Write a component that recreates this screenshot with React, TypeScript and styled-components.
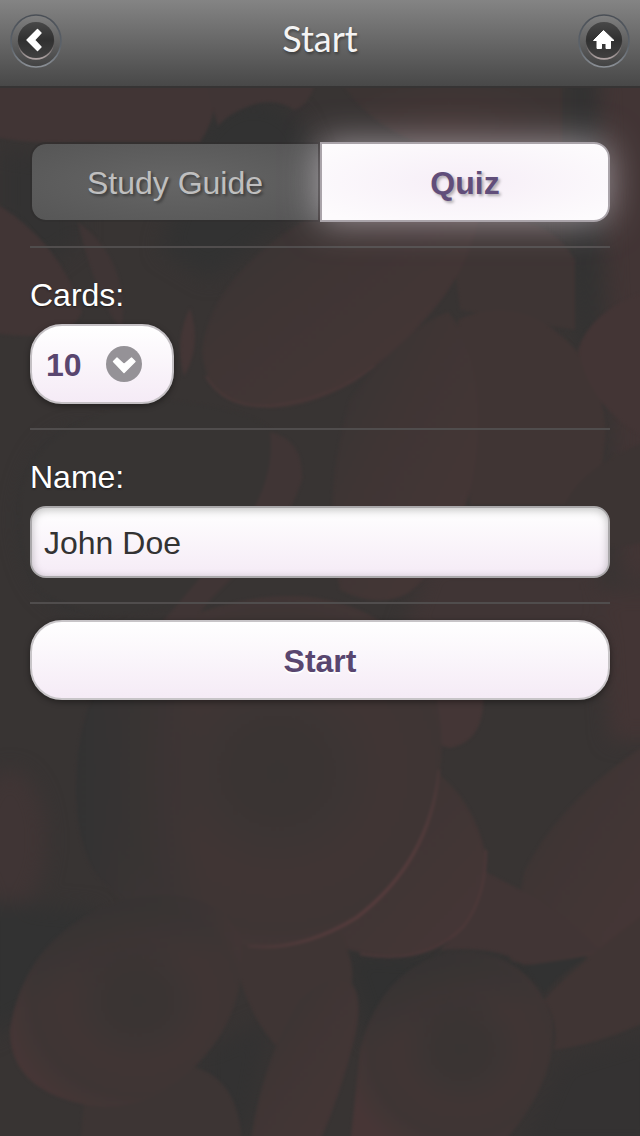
import React, { useState } from "react";
import styled, { createGlobalStyle } from "styled-components";

const GlobalStyle = createGlobalStyle`
  * { box-sizing: border-box; }
  body { margin: 0; background: #343332; }
  body, button, input, select { font-family: "Liberation Sans", Helvetica, Arial, sans-serif; }
`;

const Page = styled.div`
  position: relative;
  min-height: 100vh;
  overflow: hidden;
  isolation: isolate;
  font-size: 32px;
  color: #fff;
`;

const Backdrop = styled.svg`
  position: absolute;
  inset: 0;
  width: 100%;
  height: 100%;
  z-index: -1;
`;

const Header = styled.header`
  display: flex;
  align-items: center;
  justify-content: space-between;
  height: 88px;
  padding: 0 10px 4px;
  border-bottom: 2px solid #363434;
  background: linear-gradient(#848484, #484848);
`;

const Title = styled.h1`
  margin: 0;
  padding-bottom: 6px;
  color: #f4f4f4;
  font: 400 36px/44px Lato, "Open Sans", sans-serif;
  text-shadow: 1px 2px 3px rgba(0, 0, 0, 0.4);
`;

const RoundButton = styled.button`
  display: flex;
  width: 52px;
  height: 54px;
  padding: 0;
  border: 0;
  background: none;
  cursor: pointer;
`;

const Form = styled.form`
  display: flex;
  flex-direction: column;
  padding: 54px 30px;
`;

const Segments = styled.div`
  display: flex;
`;

const HiddenRadio = styled.input`
  position: absolute;
  opacity: 0;
  pointer-events: none;
`;

const Segment = styled.label<{ $on: boolean; $side: "left" | "right" }>`
  position: relative;
  z-index: ${(p) => (p.$on ? 1 : 0)};
  display: flex;
  flex: 1;
  align-items: center;
  justify-content: center;
  height: 80px;
  padding-top: 2px;
  border: 2px solid ${(p) => (p.$on ? "#aaa4aa" : "rgba(45, 43, 43, 0.5)")};
  border-radius: ${(p) => (p.$side === "left" ? "16px 0 0 16px" : "0 16px 16px 0")};
  background: ${(p) =>
    p.$on
      ? "radial-gradient(ellipse at center, #f6eef7, #fdfbfd 90%)"
      : "radial-gradient(ellipse at center, #666, #565656) padding-box"};
  box-shadow: ${(p) => (p.$on ? "0 0 36px rgba(255, 245, 255, 0.5)" : "none")};
  color: ${(p) => (p.$on ? "#614e7a" : "#bfbfbf")};
  font-weight: ${(p) => (p.$on ? 700 : 400)};
  text-shadow: 2px 2px 3px ${(p) => (p.$on ? "rgba(0, 0, 0, 0.3)" : "rgba(0, 0, 0, 0.4)")};
  cursor: pointer;
`;

const Divider = styled.hr`
  width: 100%;
  height: 2px;
  margin: 24px 0;
  border: 0;
  background: #504d4d;
`;

const FieldLabel = styled.label`
  margin-bottom: 6px;
  line-height: 46px;
  text-shadow: 0 1px 2px rgba(0, 0, 0, 0.5);
`;

const SelectWrap = styled.div`
  position: relative;
  align-self: flex-start;
`;

const Select = styled.select`
  display: block;
  width: 144px;
  height: 80px;
  padding: 2px 14px 0;
  appearance: none;
  border: 2px solid #c4c0c4;
  border-radius: 32px;
  background: linear-gradient(#fff, #f5ebf6);
  box-shadow: 0 2px 6px rgba(0, 0, 0, 0.4);
  color: #59466f;
  font-size: 32px;
  font-weight: 700;
`;

const SelectArrow = styled.svg`
  position: absolute;
  top: 22px;
  right: 32px;
  pointer-events: none;
`;

const TextInput = styled.input`
  width: 100%;
  height: 72px;
  padding: 2px 12px 0;
  border: 2px solid #aaa8aa;
  border-radius: 16px;
  background: linear-gradient(#fff, #f5ebf6);
  box-shadow: inset 0 2px 8px rgba(0, 0, 0, 0.25);
  color: #333;
  font-size: 32px;
`;

const SubmitButton = styled.button`
  height: 80px;
  margin-top: -8px;
  padding: 2px 0 0;
  border: 2px solid #c8c5c8;
  border-radius: 32px;
  background: linear-gradient(#fff, #f5ebf6);
  box-shadow: 0 2px 6px rgba(0, 0, 0, 0.4);
  color: #59466f;
  font-size: 32px;
  font-weight: 700;
  text-shadow: 0 2px 0 #fff;
  cursor: pointer;
`;

function ButtonFace({ id, children }: { id: string; children: React.ReactNode }) {
  return (
    <svg width="52" height="54" viewBox="0 0 52 54" aria-hidden="true">
      <defs>
        <linearGradient id={`${id}-ring`} x1="0" y1="0" x2="0" y2="1">
          <stop offset="0" stopColor="#4a4f56" />
          <stop offset="0.6" stopColor="#5c636b" />
          <stop offset="1" stopColor="#8b9096" />
        </linearGradient>
        <linearGradient id={`${id}-well`} x1="0" y1="0" x2="0" y2="1">
          <stop offset="0" stopColor="#808080" />
          <stop offset="1" stopColor="#424242" />
        </linearGradient>
        <linearGradient id={`${id}-rim`} x1="0" y1="0" x2="0" y2="1">
          <stop offset="0.5" stopColor="#4a4848" />
          <stop offset="1" stopColor="#b5a9a9" />
        </linearGradient>
        <linearGradient id={`${id}-disc`} x1="0" y1="0" x2="0" y2="1">
          <stop offset="0" stopColor="#484848" />
          <stop offset="0.5" stopColor="#303030" />
          <stop offset="1" stopColor="#404040" />
        </linearGradient>
      </defs>
      <ellipse cx="26" cy="27" rx="25" ry="26" fill={`url(#${id}-well)`} stroke={`url(#${id}-ring)`} strokeWidth="1.6" />
      <circle cx="26" cy="27.5" r="18.300" fill={`url(#${id}-rim)`} />
      <circle cx="26" cy="26" r="18" fill={`url(#${id}-disc)`} />
      {children}
    </svg>
  );
}

function CellsBackdrop() {
  return (
    <Backdrop viewBox="0 0 640 1136" preserveAspectRatio="xMidYMid slice" aria-hidden="true">
      <defs>
        <radialGradient id="cell">
          <stop offset="0" stopColor="#433635" />
          <stop offset="0.6" stopColor="#3f3534" />
          <stop offset="1" stopColor="#3c3433" />
        </radialGradient>
        <linearGradient id="lit" x1="0" y1="0" x2="1" y2="1">
          <stop offset="0" stopColor="#353333" />
          <stop offset="0.4" stopColor="#3f3534" />
          <stop offset="1" stopColor="#463636" />
        </linearGradient>
        <radialGradient id="big" cx="0.55" cy="0.5" r="0.6">
          <stop offset="0" stopColor="#393433" />
          <stop offset="0.2" stopColor="#3a3433" />
          <stop offset="0.5" stopColor="#403534" />
          <stop offset="0.75" stopColor="#3e3534" />
          <stop offset="1" stopColor="#473636" />
        </radialGradient>
        <linearGradient id="shade" x1="0" y1="0" x2="1" y2="0">
          <stop offset="0" stopColor="#323232" />
          <stop offset="0.35" stopColor="#323232" stopOpacity="0" />
        </linearGradient>
        <linearGradient id="top-shade" x1="0" y1="0" x2="0.3" y2="1">
          <stop offset="0" stopColor="#333232" />
          <stop offset="0.5" stopColor="#333232" stopOpacity="0" />
        </linearGradient>
        <linearGradient id="rim" x1="0" y1="0" x2="1" y2="1">
          <stop offset="0.4" stopColor="#583c3d" stopOpacity="0" />
          <stop offset="0.7" stopColor="#583c3d" />
        </linearGradient>
        <filter id="soft" filterUnits="userSpaceOnUse" x="-60" y="-60" width="760" height="1256" colorInterpolationFilters="sRGB">
          <feGaussianBlur stdDeviation="10" />
        </filter>
        <filter id="focus" filterUnits="userSpaceOnUse" x="-60" y="-60" width="760" height="1256" colorInterpolationFilters="sRGB">
          <feGaussianBlur stdDeviation="1.5" />
        </filter>
      </defs>
      <rect width="640" height="1136" fill="#383433" />
      <g filter="url(#soft)">
        <path d="M570 70H595V430L570 270Z" fill="#323232" />
        <path d="M200 130C230 90 270 90 300 120L330 190L210 280L160 250Z" fill="#323232" />
        <path d="M0 150L80 160V240L40 270L0 220Z" fill="#333232" />
        <ellipse cx="80" cy="520" rx="60" ry="90" fill="#343333" />
        <path d="M600 60H680V580H620L610 300Z" fill="#423535" />
        <path d="M600 590H680V740H610Z" fill="#433535" />
        <path d="M430 560H600V640H400Z" fill="#403535" />
        <ellipse cx="10" cy="840" rx="36" ry="70" fill="#403535" />
        <path d="M-20 900L100 910L60 1000L-20 1040Z" fill="#323232" />
        <path d="M200 1050L270 1020L250 1136H200Z" fill="#333232" />
        <path d="M340 950L540 960L530 1040L370 1040Z" fill="#313131" />
        <path d="M560 1060L660 1030V1150H520Z" fill="#343232" />
      </g>

      <g filter="url(#focus)">
        <path d="M-10 80H205Q225 105 200 142H75Q30 145 -10 136Z" fill="#413535" />
        <path d="M205 80H316Q310 105 294 110Q278 98 255 104Q230 112 218 126Z" fill="#403535" />
        <path d="M340 80H562V150Q520 180 440 150Q370 130 340 80Z" fill="url(#cell)" />
        <path d="M-10 200Q60 240 82 312Q68 346 -10 332Z" fill="#413535" />
        <path d="M78 222Q130 260 122 330Q96 300 78 222Z" fill="#3f3535" />
        <path d="M190 308Q202 346 184 376Q174 340 190 308Z" fill="#443636" />

        <path d="M450 230Q540 200 575 260V330L460 310Z" fill="#3e3534" />
        <path d="M458 320Q520 290 576 350Q612 400 604 450Q596 520 566 505L470 505Z" fill="#403534" />
        <path d="M650 290Q590 310 578 350Q590 410 650 440Z" fill="#433535" />
        <path d="M350 400Q400 330 448 312Q482 350 478 440Q470 540 410 592Q380 610 340 590Q320 500 350 400Z" fill="url(#lit)" />
        <path d="M202 350Q212 268 330 206Q440 166 480 210Q468 300 354 382Q286 420 238 402Q204 390 202 350Z" fill="url(#lit)" />
        <path d="M206 376Q224 408 270 406Q330 400 374 366" fill="none" stroke="#4c3939" strokeWidth="2" />

        <path d="M20 500Q30 420 160 400Q280 410 280 450Q274 530 210 590Q110 640 40 590Q18 560 20 500Z" fill="#373433" />
        <path d="M270 432Q304 440 302 480Q286 530 240 570L210 600Q180 640 130 660Q190 590 240 530Q276 480 270 432Z" fill="#403535" />
        <path d="M650 440Q570 470 560 520Q590 560 650 540Z" fill="#3c3433" />

        <path d="M440 680H482Q490 740 450 748L430 742Z" fill="#443636" />
        <path d="M650 742Q560 800 524 872L510 960Q560 980 650 930Z" fill="url(#lit)" />
        <path d="M482 870Q490 900 440 950Q500 945 524 965Q570 955 600 950L540 900Z" fill="#413535" />
        <path d="M434 770Q474 800 486 856Q488 926 430 950Q380 965 322 940Z" fill="url(#lit)" />
        <path d="M486 850Q486 896 464 926Q426 966 360 954" fill="none" stroke="#4f393a" strokeWidth="2" />

        <path d="M230 930L330 920Q360 960 350 990Q300 990 280 1050Q240 1010 230 930Z" fill="#3f3534" />
        <path d="M76 790Q76 650 180 620Q330 560 414 650Q452 700 438 790Q420 870 356 918Q300 952 250 946Q140 930 94 872Q76 840 76 790Z" fill="url(#big)" />
        <path d="M76 790Q76 650 180 620Q330 560 414 650Q452 700 438 790Q420 870 356 918Q300 952 250 946Q140 930 94 872Q76 840 76 790Z" fill="url(#shade)" />
        <path d="M439 770Q430 862 356 918Q300 952 248 946" fill="none" stroke="url(#rim)" strokeWidth="3" />

        <path d="M180 1065Q240 1070 242 1146H80L84 1100Z" fill="#3d3534" />
        <path d="M10 1030Q24 936 120 900Q210 880 240 936Q252 1020 180 1080Q130 1118 74 1102Q10 1085 10 1030Z" fill="url(#big)" />
        <path d="M10 1030Q24 936 120 900Q210 880 240 936Q252 1020 180 1080Q130 1118 74 1102Q10 1085 10 1030Z" fill="url(#top-shade)" />

        <path d="M250 1146Q262 1060 300 1000Q330 970 352 984Q364 1000 354 1040Q342 1090 318 1146Z" fill="url(#lit)" />
        <path d="M360 1050Q380 970 450 952Q530 948 552 1020Q560 1080 500 1146H350Q356 1090 360 1050Z" fill="url(#big)" />
        <path d="M360 1050Q380 970 450 952Q530 948 552 1020Q560 1080 500 1146H350Q356 1090 360 1050Z" fill="url(#top-shade)" />
        <path d="M650 910Q570 970 544 1000Q560 1024 554 1050Q600 1044 650 1020Z" fill="#403534" />
        <path d="M524 966L588 956Q560 974 544 992Z" fill="#323232" />
      </g>
    </Backdrop>
  );
}

export default function App() {
  const [mode, setMode] = useState("quiz");
  const [name, setName] = useState("John Doe");

  return (
    <>
      <GlobalStyle />
      <Page>
        <CellsBackdrop />
        <Header>
          <RoundButton type="button" aria-label="Back">
            <ButtonFace id="back">
              <path
                d="M27.500 15.500L31 19L24.500 26L31 33L27.500 36.500L17 26Z"
                fill="#fff"
                stroke="#fff"
                strokeWidth="1.4"
                strokeLinejoin="round"
              />
            </ButtonFace>
          </RoundButton>
          <Title>Start</Title>
          <RoundButton type="button" aria-label="Home">
            <ButtonFace id="home">
              <path
                d="M25.500 16.500L36 26.500H32.500V34.500H28V29.500H23.500V34.500H19V26.500H15.500Z"
                fill="#fff"
                stroke="#fff"
                strokeLinejoin="round"
              />
            </ButtonFace>
          </RoundButton>
        </Header>
        <Form onSubmit={(e) => e.preventDefault()}>
          <Segments role="radiogroup" aria-label="Mode">
            <Segment $side="left" $on={mode === "study"}>
              <HiddenRadio type="radio" name="mode" checked={mode === "study"} onChange={() => setMode("study")} />
              Study Guide
            </Segment>
            <Segment $side="right" $on={mode === "quiz"}>
              <HiddenRadio type="radio" name="mode" checked={mode === "quiz"} onChange={() => setMode("quiz")} />
              Quiz
            </Segment>
          </Segments>
          <Divider />
          <FieldLabel htmlFor="cards">Cards:</FieldLabel>
          <SelectWrap>
            <Select id="cards" defaultValue="10">
              <option>10</option>
              <option>20</option>
              <option>30</option>
            </Select>
            <SelectArrow width="36" height="36" viewBox="0 0 36 36" aria-hidden="true">
              <circle cx="18" cy="18" r="18" fill="#959297" />
              <path
                d="M7.500 15.500L11 12L18 18.500L25.500 12L29 15.500L18 26.500Z"
                fill="#fff"
                stroke="#fff"
                strokeWidth="1.4"
                strokeLinejoin="round"
              />
            </SelectArrow>
          </SelectWrap>
          <Divider />
          <FieldLabel htmlFor="name">Name:</FieldLabel>
          <TextInput id="name" type="text" value={name} onChange={(e) => setName(e.target.value)} />
          <Divider />
          <SubmitButton type="submit">Start</SubmitButton>
        </Form>
      </Page>
    </>
  );
}
